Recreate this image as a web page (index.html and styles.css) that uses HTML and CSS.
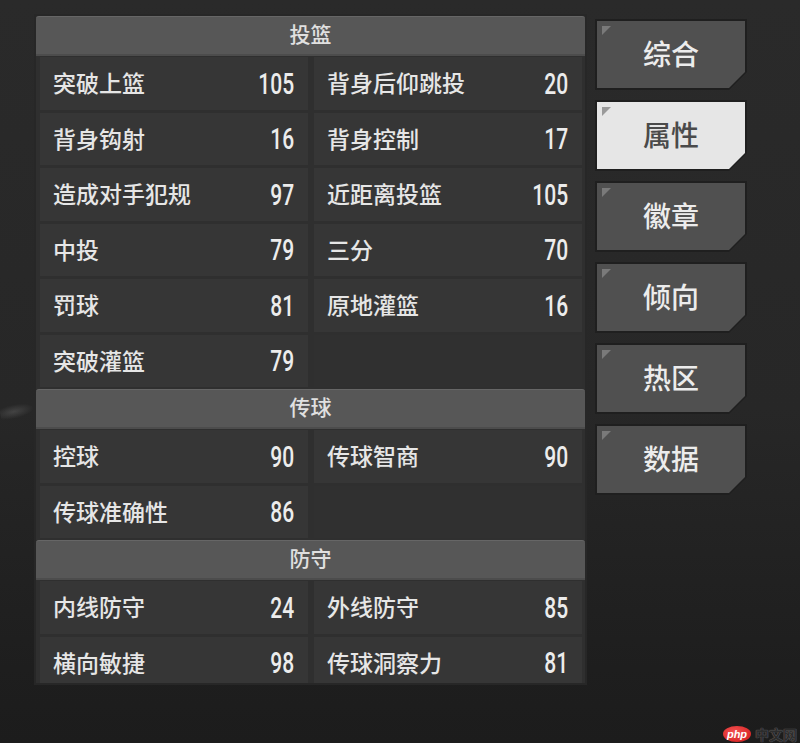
FILE: index.html
```html
<!DOCTYPE html>
<html lang="zh-CN">
<head>
<meta charset="utf-8">
<title>球员属性</title>
<link rel="stylesheet" href="styles.css">
</head>
<body>
<div class="screen">
  <div class="panel">
    <div class="sec-head">投篮</div>
    <div class="row"><div class="cell"><span class="label">突破上篮</span><span class="val">105</span></div><div class="cell"><span class="label">背身后仰跳投</span><span class="val">20</span></div></div>
    <div class="row"><div class="cell"><span class="label">背身钩射</span><span class="val">16</span></div><div class="cell"><span class="label">背身控制</span><span class="val">17</span></div></div>
    <div class="row"><div class="cell"><span class="label">造成对手犯规</span><span class="val">97</span></div><div class="cell"><span class="label">近距离投篮</span><span class="val">105</span></div></div>
    <div class="row"><div class="cell"><span class="label">中投</span><span class="val">79</span></div><div class="cell"><span class="label">三分</span><span class="val">70</span></div></div>
    <div class="row"><div class="cell"><span class="label">罚球</span><span class="val">81</span></div><div class="cell"><span class="label">原地灌篮</span><span class="val">16</span></div></div>
    <div class="row"><div class="cell"><span class="label">突破灌篮</span><span class="val">79</span></div><div class="cell empty"></div></div>
    <div class="sec-head">传球</div>
    <div class="row"><div class="cell"><span class="label">控球</span><span class="val">90</span></div><div class="cell"><span class="label">传球智商</span><span class="val">90</span></div></div>
    <div class="row"><div class="cell"><span class="label">传球准确性</span><span class="val">86</span></div><div class="cell empty"></div></div>
    <div class="sec-head">防守</div>
    <div class="row"><div class="cell"><span class="label">内线防守</span><span class="val">24</span></div><div class="cell"><span class="label">外线防守</span><span class="val">85</span></div></div>
    <div class="row"><div class="cell"><span class="label">横向敏捷</span><span class="val">98</span></div><div class="cell"><span class="label">传球洞察力</span><span class="val">81</span></div></div>
  </div>
  <div class="tabs">
    <div class="tab-wrap"><div class="tab">综合</div></div>
    <div class="tab-wrap"><div class="tab active">属性</div></div>
    <div class="tab-wrap"><div class="tab">徽章</div></div>
    <div class="tab-wrap"><div class="tab">倾向</div></div>
    <div class="tab-wrap"><div class="tab">热区</div></div>
    <div class="tab-wrap"><div class="tab">数据</div></div>
  </div>
</div>
<div class="smudge"></div>
<div class="watermark"><span class="wm-logo">php</span><span class="wm-text">中文网</span></div>
</body>
</html>
```

FILE: styles.css
```css
* { box-sizing: border-box; }
html, body {
  margin: 0;
  width: 800px;
  height: 743px;
  overflow: hidden;
}
body {
  background: linear-gradient(180deg, #2a2a2a 0%, #272727 55%, #1e1e1e 90%, #1c1c1c 100%);
  font-family: "Noto Sans CJK SC", "Noto Sans", sans-serif;
  position: relative;
}
.screen {
  display: flex;
  align-items: flex-start;
  padding: 16px 0 0 36px;
  gap: 10px;
}
.panel {
  width: 549px;
  height: 667px;
  overflow: hidden;
  background: #2f2f2f;
  box-shadow: 0 0 0 2px #272727;
  display: flex;
  flex-direction: column;
}
.sec-head {
  flex: 0 0 40px;
  height: 40px;
  background: #575757;
  border-top: 1px solid #666;
  border-bottom: 2px solid #4c4c4c;
  border-radius: 3px 3px 0 0;
  color: #e0e0e0;
  font-size: 21px;
  font-weight: 500;
  display: flex;
  align-items: center;
  justify-content: center;
  padding-bottom: 5px;
}
.row {
  flex: 0 0 55.5px;
  height: 55.5px;
  display: grid;
  grid-template-columns: 1fr 1fr;
  column-gap: 6px;
  padding: 1px 3px 2px 4px;
}
.cell {
  background: #363636;
  display: flex;
  align-items: center;
  justify-content: space-between;
  padding: 0 14px 2px 13px;
}
.cell.empty { background: #303030; }
.label {
  color: #e6e6e6;
  font-size: 23px;
  font-weight: 500;
  letter-spacing: 0;
}
.val {
  display: inline-block;
  color: #ececec;
  font-family: Roboto, "Liberation Sans", sans-serif;
  font-size: 30px;
  line-height: 1;
  font-weight: 500;
  margin-top: 3px;
  transform: scaleX(0.7);
  transform-origin: right center;
}
.tabs {
  margin-top: 3px;
  display: flex;
  flex-direction: column;
  gap: 10px;
}
.tab-wrap {
  width: 152px;
  height: 71px;
  padding: 2px;
  background: #1f1f1f;
  clip-path: polygon(0 0, 100% 0, 100% calc(100% - 18px), calc(100% - 18px) 100%, 0 100%);
}
.tab {
  position: relative;
  width: 148px;
  height: 67px;
  background: #505050;
  color: #ececec;
  font-size: 28px;
  font-weight: 500;
  display: flex;
  align-items: center;
  justify-content: center;
  padding-bottom: 4px;
  clip-path: polygon(0 0, 100% 0, 100% calc(100% - 16px), calc(100% - 16px) 100%, 0 100%);
}
.tab::before {
  content: "";
  position: absolute;
  left: 5px;
  top: 5px;
  width: 0;
  height: 0;
  border-top: 9px solid #7a7a7a;
  border-right: 9px solid transparent;
}
.tab.active {
  background: #e6e6e6;
  color: #4a4a4a;
}
.tab.active::before { border-top-color: #9a9a9a; }
.smudge {
  position: absolute;
  left: 0;
  top: 404px;
  width: 34px;
  height: 14px;
  background: radial-gradient(ellipse at 40% 50%, rgba(120,120,120,0.35), rgba(120,120,120,0) 70%);
  transform: rotate(-12deg);
}
.watermark {
  position: absolute;
  right: 3px;
  bottom: 1px;
  display: flex;
  align-items: center;
  gap: 4px;
}
.wm-logo {
  display: inline-flex;
  align-items: center;
  justify-content: center;
  width: 28px;
  height: 16px;
  border-radius: 50%;
  background: radial-gradient(ellipse at 40% 35%, #f25050, #d21a1a);
  color: #fff;
  font-family: "Liberation Sans", sans-serif;
  font-style: italic;
  font-weight: 700;
  font-size: 11px;
  line-height: 1;
}
.wm-text {
  color: #2c2c2c;
  font-size: 14px;
  font-weight: 700;
  line-height: 1;
  text-shadow: 0 0 1px #6a6a6a, 0 0 1px #6a6a6a;
}
```
